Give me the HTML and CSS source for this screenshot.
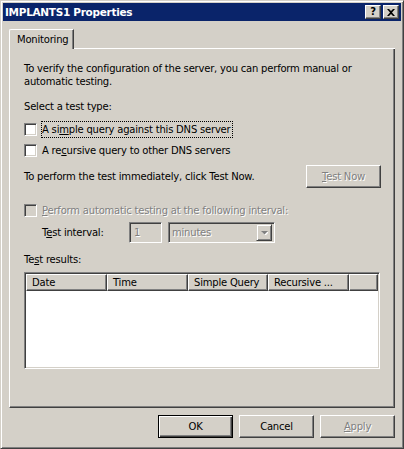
FILE: index.html
```html
<!DOCTYPE html>
<html lang="en">
<head>
  <meta charset="UTF-8">
  <title>IMPLANTS1 Properties</title>
  <link rel="stylesheet" href="styles.css">
</head>
<body>
  <div class="window">
    <div class="titlebar">
      <span class="title">IMPLANTS1 Properties</span>
      <div class="caption-buttons">
        <span class="cap-btn">?</span>
        <span class="cap-btn">
          <svg width="8" height="7" viewBox="0 0 8 7"><path d="M0 0h2l2 2 2-2h2L5 3.5 8 7H6L4 5 2 7H0l3-3.5z" fill="#000"/></svg>
        </span>
      </div>
    </div>

    <div class="client">
      <div class="tabs">
        <div class="tab">Monitoring</div>
        <div class="tab-fill"></div>
      </div>

      <div class="panel">
        <p class="intro">To verify the configuration of the server, you can perform manual or automatic testing.</p>
        <p class="label">Select a test type:</p>

        <div class="check first">
          <span class="box"></span>
          <span class="focus">A si<u>m</u>ple query against this DNS server</span>
        </div>
        <div class="check">
          <span class="box"></span>
          <span class="check-text">A re<u>c</u>ursive query to other DNS servers</span>
        </div>

        <div class="now-row">
          <span>To perform the test immediately, click Test Now.</span>
          <span class="btn disabled"><span class="dim"><u>T</u>est Now</span></span>
        </div>

        <div class="check auto disabled">
          <span class="box"></span>
          <span class="check-text dim"><u>P</u>erform automatic testing at the following interval:</span>
        </div>

        <div class="interval">
          <span class="interval-label">T<u>e</u>st interval:</span>
          <span class="field num dim">1</span>
          <span class="field combo">
            <span class="dim">minutes</span>
            <span class="drop">
              <svg width="7" height="4" viewBox="0 0 7 4"><path d="M1 1h7L4.5 4.5z" fill="#fff"/><path d="M0 0h7L3.5 3.5z" fill="#808080"/></svg>
            </span>
          </span>
        </div>

        <p class="label results">Te<u>s</u>t results:</p>
        <div class="listview">
          <div class="list-header">
            <span class="col col-date">Date</span>
            <span class="col col-time">Time</span>
            <span class="col col-simple">Simple Query</span>
            <span class="col col-rec">Recursive ...</span>
            <span class="col col-rest"></span>
          </div>
        </div>
      </div>

      <div class="footer">
        <span class="btn default">OK</span>
        <span class="btn">Cancel</span>
        <span class="btn disabled"><span class="dim"><u>A</u>pply</span></span>
      </div>
    </div>
  </div>
</body>
</html>
```

FILE: styles.css
```css
body {
  margin: 0;
  font-family: "DejaVu Sans", sans-serif;
  font-size: 10px;
  letter-spacing: -0.2px;
  color: #000;
  background: #d4d0c8;
}

p {
  margin: 0;
}

u {
  text-decoration: underline;
  text-underline-offset: 1px;
}

.window {
  width: 404px;
  height: 449px;
  box-sizing: border-box;
  background: #d4d0c8;
  border: 1px solid;
  border-color: #d4d0c8 #404040 #404040 #d4d0c8;
  box-shadow: inset 1px 1px #fff, inset -1px -1px #808080;
  padding: 2px;
  display: flex;
  flex-direction: column;
}

.titlebar {
  height: 18px;
  background: #0a246a;
  display: flex;
  align-items: center;
  justify-content: space-between;
  padding: 0 2px;
}

.title {
  color: #fff;
  font-weight: bold;
  font-size: 10.5px;
  letter-spacing: -0.3px;
}

.caption-buttons {
  display: flex;
  gap: 2px;
}

.cap-btn {
  width: 16px;
  height: 14px;
  box-sizing: border-box;
  background: #d4d0c8;
  border: 1px solid;
  border-color: #fff #404040 #404040 #fff;
  box-shadow: inset -1px -1px #808080;
  display: flex;
  align-items: center;
  justify-content: center;
  font-weight: bold;
  font-size: 10px;
  line-height: 1;
}

.client {
  flex: 1;
  padding: 8px 6px 0;
  display: flex;
  flex-direction: column;
}

.tabs {
  display: flex;
  height: 20px;
}

.tab {
  width: 65px;
  box-sizing: border-box;
  border: 1px solid;
  border-color: #fff #404040 transparent #fff;
  border-bottom: none;
  border-top-left-radius: 2px;
  box-shadow: inset -1px 0 #808080;
  padding: 4px 0 0 7px;
}

.tab-fill {
  flex: 1;
  border-bottom: 1px solid #fff;
}

.panel {
  height: 359px;
  box-sizing: border-box;
  border: 1px solid;
  border-top: none;
  border-color: #fff #404040 #404040 #fff;
  box-shadow: inset -1px -1px #808080;
  padding: 13px 13px 0 14px;
  line-height: 13px;
}

.label {
  margin-top: 12px;
}

.check {
  display: flex;
  align-items: center;
  height: 15px;
  margin-top: 6px;
}

.check.first {
  margin-top: 9px;
}

.box {
  width: 13px;
  height: 13px;
  box-sizing: border-box;
  background: #fff;
  border: 1px solid;
  border-color: #808080 #fff #fff #808080;
  box-shadow: inset 1px 1px #404040, inset -1px -1px #d4d0c8;
  margin-right: 5px;
}

.check.disabled .box {
  background: #d4d0c8;
}

.focus {
  outline: 1px dotted #000;
  outline-offset: 0;
  padding: 1px 1px 1px 0;
}

.dim {
  color: #808080;
  text-shadow: 1px 1px #fff;
}

.now-row {
  display: flex;
  align-items: center;
  justify-content: space-between;
  margin-top: 7px;
}

.btn {
  width: 75px;
  height: 23px;
  box-sizing: border-box;
  background: #d4d0c8;
  border: 1px solid;
  border-color: #fff #404040 #404040 #fff;
  box-shadow: inset -1px -1px #808080;
  display: flex;
  align-items: center;
  justify-content: center;
}

.btn.default {
  border-color: #000;
  box-shadow: inset 1px 1px #fff, inset -1px -1px #404040, inset -2px -2px #808080;
}

.check.auto {
  margin-top: 15px;
}

.interval {
  display: flex;
  align-items: center;
  height: 21px;
  margin-top: 4px;
  padding-left: 18px;
}

.interval-label {
  width: 87px;
}

.field {
  height: 21px;
  box-sizing: border-box;
  border: 1px solid;
  border-color: #808080 #fff #fff #808080;
  box-shadow: inset 1px 1px #404040, inset -1px -1px #d4d0c8;
  display: flex;
  align-items: center;
  padding-left: 4px;
}

.num {
  width: 33px;
}

.combo {
  width: 107px;
  margin-left: 6px;
  justify-content: space-between;
  padding: 2px 2px 2px 3px;
}

.drop {
  width: 16px;
  height: 17px;
  box-sizing: border-box;
  border: 1px solid;
  border-color: #d4d0c8 #404040 #404040 #d4d0c8;
  box-shadow: inset 1px 1px #fff, inset -1px -1px #808080;
  display: flex;
  align-items: center;
  justify-content: center;
}

.results {
  margin-top: 10px;
}

.listview {
  margin-top: 6px;
  height: 97px;
  width: 356px;
  box-sizing: border-box;
  background: #fff;
  border: 1px solid;
  border-color: #808080 #fff #fff #808080;
  box-shadow: inset 1px 1px #404040, inset -1px -1px #d4d0c8;
  padding: 1px;
}

.list-header {
  display: flex;
  height: 17px;
}

.col {
  box-sizing: border-box;
  background: #d4d0c8;
  border: 1px solid;
  border-color: #fff #404040 #404040 #fff;
  box-shadow: inset -1px -1px #808080;
  padding: 1px 0 0 5px;
  white-space: nowrap;
}

.col-date,
.col-time {
  width: 81px;
}

.col-simple {
  width: 80px;
}

.col-rec {
  width: 81px;
}

.col-rest {
  flex: 1;
}

.footer {
  display: flex;
  justify-content: flex-end;
  gap: 6px;
  margin-top: 7px;
}
```
